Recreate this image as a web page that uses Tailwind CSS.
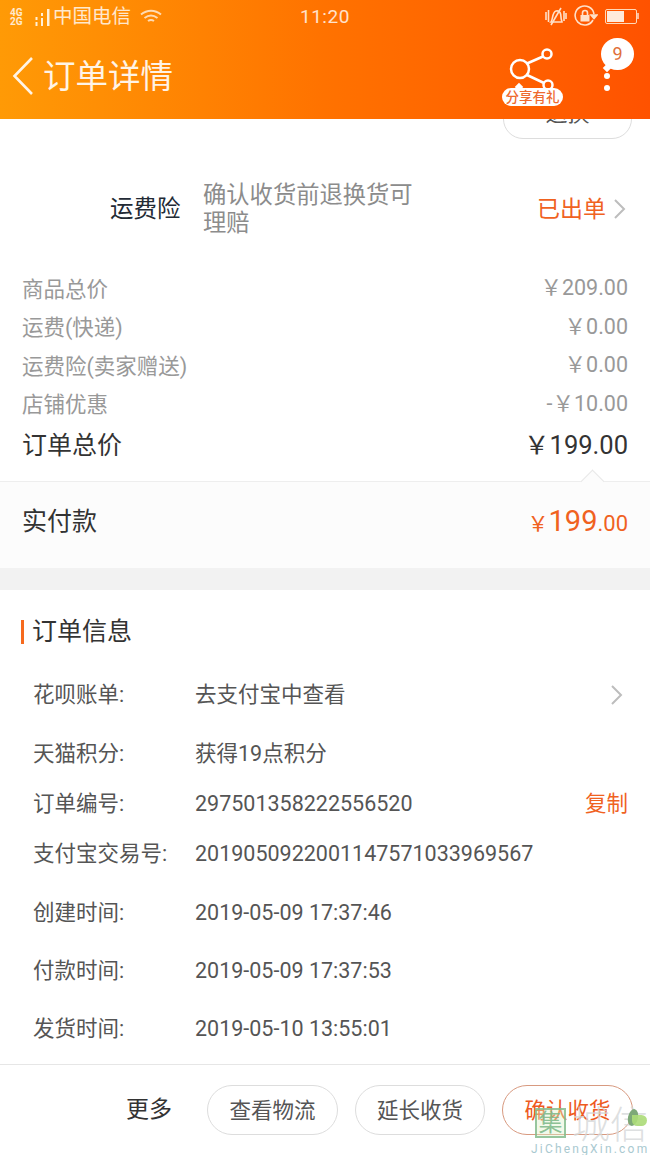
<!DOCTYPE html>
<html lang="zh">
<head>
    <meta charset="UTF-8">
    <title>订单详情</title>
    <script src="https://cdn.jsdelivr.net/npm/@tailwindcss/browser@4"></script>
</head>
<body class="bg-white font-['Roboto','Noto_Sans_CJK_SC',sans-serif]">
<div class="relative w-[650px] h-[1155px] overflow-hidden flex flex-col">

    <!-- Header -->
    <header class="relative z-10 h-[119px] shrink-0 bg-gradient-to-r from-[#ff9a06] via-[#ff7200] to-[#ff5200] text-white">
        <div class="h-[34px] flex items-center relative">
            <div class="w-[53px] pl-[10px] flex items-center">
                <div class="text-[10px] leading-[9px] font-bold text-white/80 w-[24px]">4G<br>2G</div>
                <svg width="17" height="20" viewBox="0 0 17 20" fill="#fff0d8"><rect x="1.500" y="10" width="2" height="3"/><rect x="1.500" y="15" width="2" height="4"/><rect x="7" y="6" width="2" height="3"/><rect x="7" y="11" width="2" height="8"/><rect x="13" y="2" width="2.500" height="17"/></svg>
            </div>
            <span class="text-[19.500px] text-white/80 leading-none">中国电信</span>
            <svg class="ml-[9px]" width="22" height="16" viewBox="0 0 22 16" fill="none" stroke="#fff" stroke-opacity=".7" stroke-width="2"><path d="M1 5.500c6-5 14-5 20 0"/><path d="M4.500 9c4-3 9-3 13 0"/><path d="M8 12c2-1.400 4-1.400 6 0"/></svg>
            <span class="absolute left-[300px] top-[6px] text-[19px] leading-[22px] text-white/80 tracking-[0.5px]">11:20</span>
            <div class="absolute right-[11px] top-[5px] flex items-center gap-[7px]">
                <svg width="22" height="22" viewBox="0 0 22 22" fill="none" stroke="#ffe0c8" stroke-width="1.600"><path d="M6 17c2-2 1-10 5-11s5 3 5 6 1 4 1 5z"/><path d="M6 20 16 3"/><path d="M1 7v8M3.500 5v12M19 6v10M21 8v6"/></svg>
                <svg width="24" height="22" viewBox="0 0 24 22" fill="none" stroke="#ffe0c8" stroke-width="1.600"><path d="M19 15a9.500 9.500 0 1 1 1-6"/><path d="M17 10h6l-3 3.500z" fill="#ffe0c8"/><rect x="6.500" y="10" width="9" height="6.500" fill="#ffe0c8" stroke="none"/><path d="M8.500 10V8a2.500 2.500 0 0 1 5 0v2"/></svg>
                <div class="flex items-center">
                    <div class="w-[32px] h-[15px] border border-[#ffd8b8] rounded-[2px] p-[1px]">
                        <div class="w-[17px] h-full bg-[#ffeadb]"></div>
                    </div>
                    <div class="w-[2px] h-[6px] bg-white/60"></div>
                </div>
            </div>
        </div>
        <div class="flex items-center h-[85px] pl-[12px]">
            <svg width="22" height="40" viewBox="0 0 22 40" fill="none" stroke="#fff" stroke-width="2.600" class="opacity-90 -mt-[1px]"><path d="M20 2 2.500 20 20 38"/></svg>
            <span class="ml-[9px] text-[32.500px] leading-[40px] text-white/90">订单详情</span>
        </div>
        <!-- Share -->
        <svg class="absolute left-[506px] top-[47px]" width="50" height="44" viewBox="0 0 50 44" fill="none" stroke="#fff" stroke-width="2.500"><circle cx="14" cy="22" r="9"/><circle cx="41" cy="7" r="4.500"/><circle cx="42" cy="38" r="4.500"/><path d="M21 16.500 37 9.500M21 28l17 8"/></svg>
        <div class="absolute left-[516px] top-[84px] w-[6px] h-[6px] rotate-45 bg-white"></div>
        <div class="absolute left-[502px] top-[88px] w-[61px] h-[18px] rounded-[9px] bg-white text-[#ee6a2e] text-[13.500px] leading-[18px] text-center font-medium">分享有礼</div>
        <!-- Badge and menu -->
        <div class="absolute left-[601px] top-[38px] w-[33px] h-[32px] rounded-full bg-white text-[#e0703a] text-[18px] leading-[32px] text-center">9</div>
        <div class="absolute left-[604px] top-[65px] w-[6px] h-[6px] rotate-45 bg-white"></div>
        <div class="absolute left-[604px] top-[73px] w-[6px] h-[6px] rounded-full bg-white"></div>
        <div class="absolute left-[604px] top-[85px] w-[6px] h-[6px] rounded-full bg-white"></div>
    </header>

    <!-- Scrolled content -->
    <main class="flex-1 min-h-0 overflow-hidden">
        <div class="flex justify-end pr-[18px] h-[20px]">
            <div class="w-[129px] h-[40px] -mt-[20px] border border-[#dddddd] rounded-[20px] text-center text-[22px] leading-[28px] text-[#555555]">退换</div>
        </div>

        <div class="flex items-center h-[56px] mt-[42px] pl-[110px] pr-[24px]">
            <span class="w-[93px] pt-[2px] text-[23.500px] text-[#222a35]">运费险</span>
            <p class="w-[220px] text-[23.300px] leading-[28px] text-[#8c8c8c]">确认收货前退换货可理赔</p>
            <span class="ml-auto pt-[2px] text-[23px] text-[#f0621f]">已出单</span>
            <svg class="ml-[7px]" width="13" height="22" viewBox="0 0 13 22" fill="none" stroke="#bdbdbd" stroke-width="2"><path d="M2 2l9 9-9 9"/></svg>
        </div>

        <div class="mt-[32px] px-[22px] text-[21.500px] text-[#999999]">
            <div class="flex justify-between items-center h-[38.500px]"><span class="pt-[4px]">商品总价</span><span>￥209.00</span></div>
            <div class="flex justify-between items-center h-[38.500px]"><span class="pt-[3px]">运费(快递)</span><span>￥0.00</span></div>
            <div class="flex justify-between items-center h-[38.500px]"><span class="pt-[4px]">运费险(卖家赠送)</span><span>￥0.00</span></div>
            <div class="flex justify-between items-center h-[38.500px]"><span class="pt-[3px]">店铺优惠</span><span>-￥10.00</span></div>
            <div class="flex justify-between items-center h-[44px] mt-[1px] text-[25px] text-[#333333]"><span>订单总价</span><span class="pb-[2px] text-[25.500px]">￥199.00</span></div>
        </div>

        <div class="relative mt-[13px] h-[87px] pl-[22px] pr-[22px] pb-[7px] flex items-center justify-between border-t border-[#eeeeee] bg-[#fcfcfc]">
            <div class="absolute right-[49px] -top-[9px] w-[17px] h-[17px] rotate-45 origin-center bg-[#fcfcfc] border-l border-t border-[#e8e8e8]"></div>
            <span class="text-[25px] text-[#333333]">实付款</span>
            <span class="relative text-[#f0621f] text-[22px] flex items-baseline"><span class="text-[21px]">￥</span><span class="text-[29px]">199</span><span class="text-[22px]">.00</span></span>
        </div>

        <div class="h-[22px] bg-[#f2f2f2]"></div>

        <h2 class="mt-[30px] ml-[21px] flex items-center h-[24px] text-[25px] text-[#333333]">
            <span class="w-[3px] h-[24px] bg-[#f66a1e] mr-[8px]"></span>订单信息
        </h2>

        <div class="mt-[22px] pl-[33px] pr-[22px] text-[21.500px] text-[#555555]">
            <div class="flex items-center h-[58px]"><span class="w-[162px]">花呗账单:</span><span>去支付宝中查看</span>
                <svg class="ml-auto mr-[5px]" width="13" height="22" viewBox="0 0 13 22" fill="none" stroke="#bdbdbd" stroke-width="2"><path d="M2 2l9 9-9 9"/></svg></div>
            <div class="flex items-center h-[58px] mt-[1px]"><span class="w-[162px]">天猫积分:</span><span>获得19点积分</span></div>
            <div class="flex items-center h-[42px]"><span class="w-[162px]">订单编号:</span><span>297501358222556520</span><span class="ml-auto text-[#f0621f]">复制</span></div>
            <div class="flex items-center h-[58px]"><span class="w-[162px]">支付宝交易号:</span><span>2019050922001147571033969567</span></div>
            <div class="flex items-center h-[58px] mt-[1px]"><span class="w-[162px]">创建时间:</span><span>2019-05-09 17:37:46</span></div>
            <div class="flex items-center h-[58px]"><span class="w-[162px]">付款时间:</span><span>2019-05-09 17:37:53</span></div>
            <div class="flex items-center h-[58px]"><span class="w-[162px]">发货时间:</span><span>2019-05-10 13:55:01</span></div>
        </div>
    </main>

    <!-- Bottom bar -->
    <footer class="h-[91px] shrink-0 border-t border-[#e6e6e6] bg-white flex items-center justify-end pr-[17px] gap-[17px] text-[21.500px] text-[#555555]">
        <span class="mr-[18px] text-[23px] text-[#333333]">更多</span>
        <div class="w-[131px] h-[50px] rounded-[25px] border border-[#dddddd] text-center leading-[50px]">查看物流</div>
        <div class="w-[130px] h-[50px] rounded-[25px] border border-[#dddddd] text-center leading-[50px]">延长收货</div>
        <div class="w-[131px] h-[50px] rounded-[25px] border border-[#d89a80] text-center leading-[50px] text-[#ee5a20]">确认收货</div>
    </footer>

    <!-- Watermark -->
    <div class="absolute left-[530px] top-[1106px] w-[120px] h-[49px] pointer-events-none">
        <div class="absolute left-[5px] top-[2px] w-[31px] h-[30px] border-2 border-[#7fb98a]/80 bg-[#dff0c8]/40 text-[#7fb98a]/90 text-[24px] leading-[26px] text-center">集</div>
        <div class="absolute left-[42px] top-[0px] text-[38px] leading-[38px] font-light text-[#d5d8d9]/80">城信</div>
        <div class="absolute left-[98px] top-[3px] w-[10px] h-[17px] rounded-[50%] rotate-12 bg-[#7da878]"></div>
        <div class="absolute left-[102px] top-[9px] w-[15px] h-[11px] rounded-b-full rounded-tr-full bg-[#acdc78]/90"></div>
        <div class="absolute left-[1px] top-[36px] text-[12px] leading-[14px] tracking-[2.200px] text-[#a9c9d0] whitespace-nowrap">JiChengXin.com</div>
    </div>
</div>
</body>
</html>
